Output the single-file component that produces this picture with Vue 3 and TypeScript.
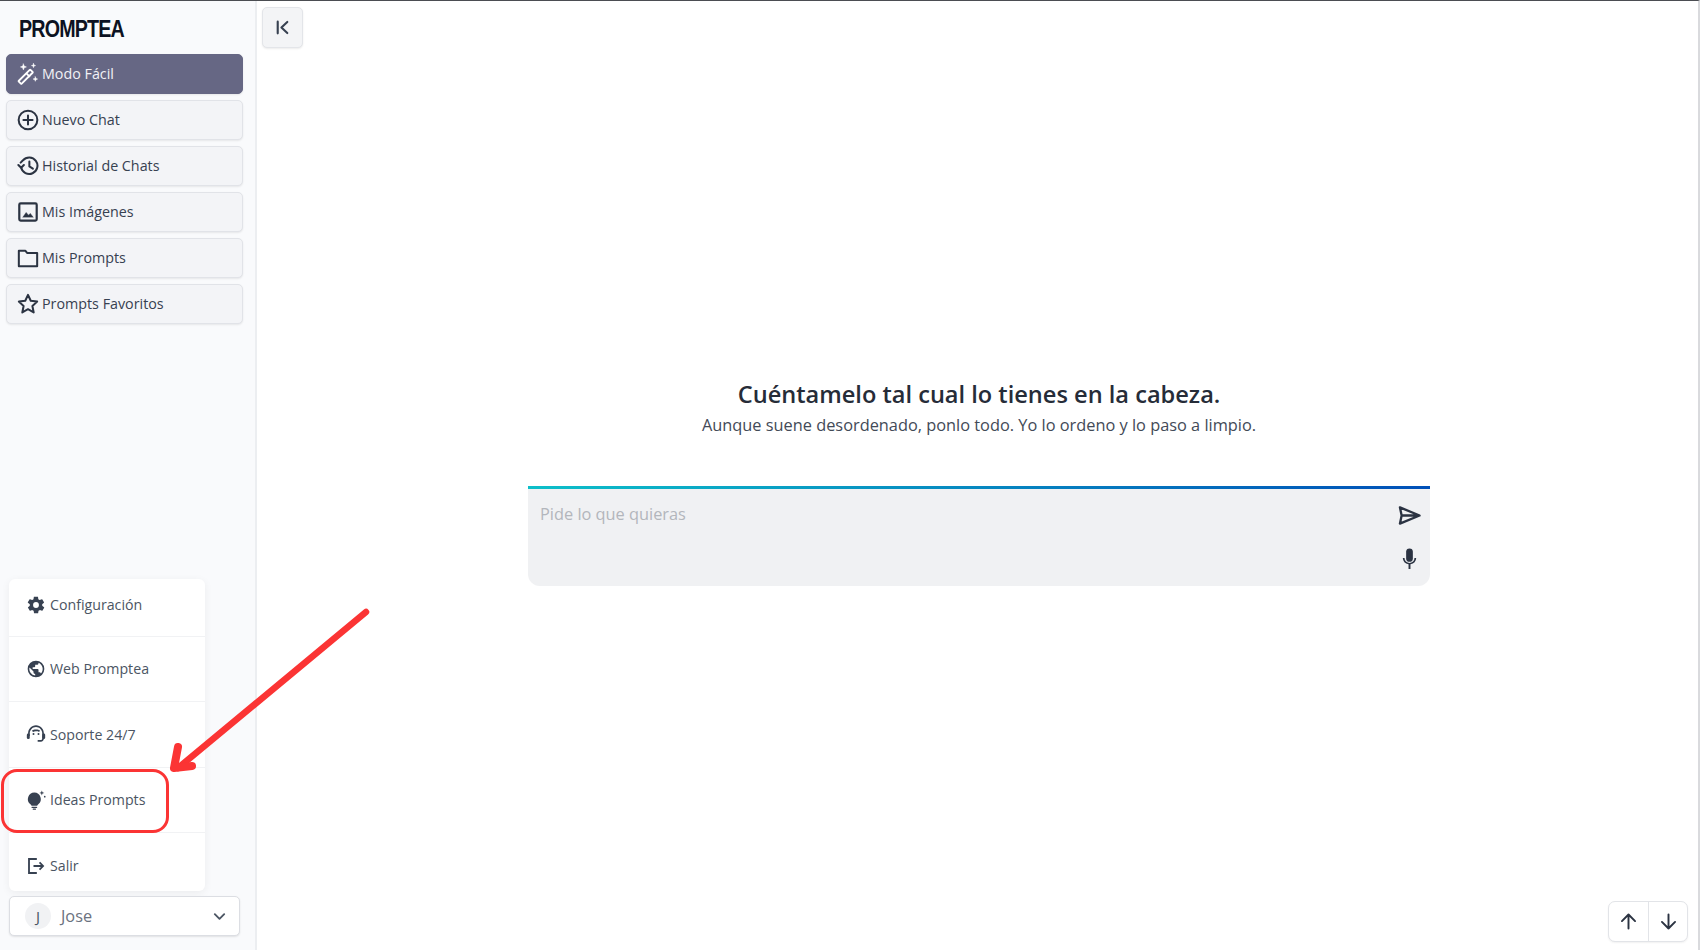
<script setup lang="ts">
const navItems = [
  { label: 'Modo Fácil', icon: 'wand', active: true },
  { label: 'Nuevo Chat', icon: 'plus', active: false },
  { label: 'Historial de Chats', icon: 'history', active: false },
  { label: 'Mis Imágenes', icon: 'image', active: false },
  { label: 'Mis Prompts', icon: 'folder', active: false },
  { label: 'Prompts Favoritos', icon: 'star', active: false },
]
const menuItems = [
  { label: 'Configuración', icon: 'gear' },
  { label: 'Web Promptea', icon: 'globe' },
  { label: 'Soporte 24/7', icon: 'support' },
  { label: 'Ideas Prompts', icon: 'bulb' },
  { label: 'Salir', icon: 'exit' },
]
</script>

<template>
  <div class="page">
    <aside class="sidebar">
      <div class="logo"><span>PROMPTEA</span></div>
      <nav class="nav">
        <button v-for="item in navItems" :key="item.label" class="nav-btn" :class="{ active: item.active }">
          <svg class="nav-icon" viewBox="0 0 24 24" fill="none" stroke="currentColor" stroke-width="2.2" stroke-linecap="round" stroke-linejoin="round">
            <template v-if="item.icon === 'wand'">
              <rect x="-2.2" y="-9" width="4.4" height="18" rx=".6" transform="translate(9.500 15) rotate(45)" stroke-width="2" />
              <path d="M10.500 11.500l3 3" stroke-width="2" />
              <path d="M7 1l.9 2.400 2.400.9-2.400.9L7 7.600l-.9-2.400-2.400-.9 2.400-.9z M18 .5l.6 1.700 1.700.6-1.700.6-.6 1.700-.6-1.700-1.700-.6 1.700-.6z M20 15l.7 1.800 1.800.7-1.800.7-.7 1.800-.7-1.800-1.800-.7 1.800-.7z" fill="currentColor" stroke-width="0.5" />
            </template>
            <template v-else-if="item.icon === 'plus'">
              <circle cx="12" cy="12" r="10.200" /><path d="M12 7v10M7 12h10" />
            </template>
            <template v-else-if="item.icon === 'history'">
              <path d="M4.500 13.500A9 9 0 1 0 6.500 5.800L4 8.300" /><path d="M1.500 11l3 3 3-3" /><path d="M13.500 7v5.500l3.800 2.400" />
            </template>
            <template v-else-if="item.icon === 'image'">
              <rect x="2.500" y="2.500" width="19" height="19" rx="1.500" stroke-width="2.400" />
              <path d="M6.500 17.500l3.500-5 2.500 3 2-2 3 4z" fill="currentColor" stroke-width="0.500" />
            </template>
            <template v-else-if="item.icon === 'folder'">
              <path d="M2 6V4h7l2 2.500h11v14.500H2z" />
            </template>
            <template v-else>
              <path d="M12 2l3 6.500 7 .9-5.200 4.800 1.400 7L12 17.700l-6.200 3.500 1.400-7L2 9.400l7-.9z" />
            </template>
          </svg>
          <span>{{ item.label }}</span>
        </button>
      </nav>

      <div class="spacer"></div>

      <div class="menu">
        <div v-for="item in menuItems" :key="item.label" class="menu-row">
          <svg class="menu-icon" viewBox="0 0 24 24" fill="currentColor">
            <path v-if="item.icon === 'gear'" fill-rule="evenodd" d="M19.400 13c.1-.3.1-.7.1-1s0-.7-.1-1l2.100-1.600c.2-.2.2-.4.1-.6l-2-3.500c-.1-.2-.4-.3-.6-.2l-2.500 1c-.5-.4-1.100-.7-1.700-1l-.4-2.600c0-.3-.2-.5-.5-.5h-4c-.3 0-.5.2-.5.5l-.4 2.600c-.6.3-1.200.6-1.700 1l-2.500-1c-.2-.1-.5 0-.6.2l-2 3.500c-.1.2-.1.5.1.6L4.600 11c0 .3-.1.7-.1 1s0 .7.1 1l-2.100 1.600c-.2.2-.2.4-.1.6l2 3.500c.1.2.4.3.6.2l2.500-1c.5.4 1.100.7 1.700 1l.4 2.600c0 .3.2.5.5.5h4c.3 0 .5-.2.5-.5l.4-2.600c.6-.3 1.200-.6 1.700-1l2.500 1c.2.1.5 0 .6-.2l2-3.500c.1-.2.1-.5-.1-.6zM12 15.500a3.500 3.500 0 1 1 0-7 3.500 3.500 0 0 1 0 7z" />
            <path v-else-if="item.icon === 'globe'" d="M12 2a10 10 0 1 0 0 20 10 10 0 0 0 0-20zm-1 17.900A8 8 0 0 1 4.200 10.200L9 15v1c0 1.100.9 2 2 2zm6.900-2.500c-.3-.8-1-1.400-1.900-1.400h-1v-3c0-.6-.4-1-1-1H8v-2h2c.6 0 1-.4 1-1V7h2c1.100 0 2-.9 2-2v-.4a8 8 0 0 1 2.900 12.800z" />
            <template v-else-if="item.icon === 'support'">
              <path d="M12 1.500C6.500 1.500 2.500 6 2.500 11.500v3h2v-3C4.500 7 7.800 3.500 12 3.500s7.500 3.500 7.500 8v6c0 1-.7 1.800-1.700 1.800H14v2h3.800c2.100 0 3.700-1.700 3.700-3.800v-6c0-5.500-4-10-9.500-10z" />
              <rect x="1" y="11.500" width="3.500" height="6.500" rx="1.600" />
              <rect x="19.500" y="11.500" width="3.500" height="6.500" rx="1.600" />
              <circle cx="9" cy="12" r="1.200" /><circle cx="15" cy="12" r="1.200" />
              <path d="M7 8C9 6 15 6 17 8L15.500 9.500c-1.500-1-5.500-1-7 0z" />
            </template>
            <template v-else-if="item.icon === 'bulb'">
              <path d="M10 3a8 8 0 0 0-4.800 14.200c.7.500 1.300 1 1.300 1.800h7c0-.8.600-1.300 1.300-1.800A8 8 0 0 0 10 3z" />
              <rect x="6.500" y="20" width="7" height="1.600" rx=".8" />
              <rect x="8" y="22.300" width="4" height="1.400" rx=".7" />
              <path d="M19 .5l.8 2.200 2.200.8-2.200.8-.8 2.200-.8-2.200-2.200-.8 2.200-.8z" />
              <circle cx="22.500" cy="8" r="1" />
            </template>
            <path v-else d="M2.500 2.500H13v2.200H4.700v14.600H13v2.200H2.500zM17 7l5 5-5 5-1.500-1.500 2.400-2.400H9v-2.200h8.900l-2.400-2.400z" />
          </svg>
          <span>{{ item.label }}</span>
        </div>
      </div>

      <div class="user">
        <span class="avatar">J</span>
        <span class="user-name">Jose</span>
        <svg class="chev" viewBox="0 0 16 16" fill="none" stroke="currentColor" stroke-width="2" stroke-linecap="round" stroke-linejoin="round"><path d="M3 5.500l5 5 5-5" /></svg>
      </div>
    </aside>

    <main class="main">
      <button class="collapse" aria-label="Contraer">
        <svg viewBox="0 0 16 16" fill="none" stroke="currentColor" stroke-width="2" stroke-linecap="round" stroke-linejoin="round"><path d="M3.500 2.500v11M12.500 2.800L7 8l5.500 5.200" /></svg>
      </button>

      <section class="center">
        <h1 class="title">Cuéntamelo tal cual lo tienes en la cabeza.</h1>
        <p class="subtitle">Aunque suene desordenado, ponlo todo. Yo lo ordeno y lo paso a limpio.</p>
        <div class="composer">
          <span class="placeholder">Pide lo que quieras</span>
          <div class="composer-actions">
            <svg class="send" viewBox="0 0 24 24" fill="none" stroke="currentColor" stroke-width="2.400" stroke-linejoin="round"><path d="M2 3.500L22.500 12 2 20.500l1.800-8.500zM4 12h18" /></svg>
            <svg class="mic" viewBox="0 0 24 24" fill="currentColor"><rect x="8.500" y="1.500" width="7" height="14" rx="3.500" /><path d="M5 11.500h1.800a5.200 5.200 0 0 0 10.400 0H19a7 7 0 0 1-6 6.500V23h-2v-5a7 7 0 0 1-6-6.500z" /></svg>
          </div>
        </div>
      </section>

      <div class="pager">
        <button class="pager-btn" aria-label="Subir">
          <svg viewBox="0 0 24 24" fill="none" stroke="currentColor" stroke-width="2.200" stroke-linecap="round" stroke-linejoin="round"><path d="M12 20V4M4.500 11.500L12 4l7.500 7.500" /></svg>
        </button>
        <button class="pager-btn" aria-label="Bajar">
          <svg viewBox="0 0 24 24" fill="none" stroke="currentColor" stroke-width="2.200" stroke-linecap="round" stroke-linejoin="round"><path d="M12 4v16M4.500 12.500L12 20l7.500-7.500" /></svg>
        </button>
      </div>
    </main>

    <svg class="annotation" width="380" height="300" viewBox="0 0 380 300" fill="none" stroke="#fb3434" stroke-linecap="round" stroke-linejoin="round">
      <path d="M366 41L178 197" stroke-width="6.500" />
      <path d="M178 176L174 197L192 195" stroke-width="8" />
    </svg>
    <div class="highlight"></div>
  </div>
</template>

<style>
html, body { margin: 0; background: #fff; }
</style>

<style scoped>
.page {
  position: relative;
  display: flex;
  width: 1700px;
  height: 950px;
  overflow: hidden;
  box-sizing: border-box;
  border-top: 1px solid #4b4d52;
  border-right: 2px solid #d9dadd;
  font-family: "Open Sans", "Liberation Sans", sans-serif;
  color: #374151;
}
.sidebar {
  width: 257px;
  flex: none;
  box-sizing: border-box;
  background: #f9fafc;
  border-right: 2px solid #eceef1;
  display: flex;
  flex-direction: column;
  padding: 0 0 13px 6px;
}
.logo {
  margin: 14px 0 0 13px;
  height: 27px;
  line-height: 28px;
  font-family: "Liberation Sans", sans-serif;
  font-size: 24px;
  font-weight: 700;
  letter-spacing: -1px;
  color: #0c1222;
}
.logo span { display: inline-block; transform: scaleX(.82); transform-origin: left center; }
.nav { margin-top: 12px; display: flex; flex-direction: column; gap: 6px; width: 237px; }
.nav-btn {
  height: 40px;
  box-sizing: border-box;
  display: flex;
  align-items: center;
  gap: 3px;
  padding: 0 0 0 10px;
  background: #f3f4f7;
  border: 1px solid #e1e3e8;
  border-radius: 5px;
  box-shadow: 0 1px 2px rgba(0,0,0,.08);
  font: 14.300px "Open Sans", sans-serif;
  color: #374151;
}
.nav-btn span { position: relative; top: -1px; }
.nav-btn.active { background: #666784; border-color: #666784; color: #f1f1f6; }
.nav-icon { width: 22px; height: 22px; flex: none; color: #2b3342; }
.active .nav-icon { color: #fff; }
.spacer { flex: 1; }
.menu {
  width: 196px;
  margin-left: 3px;
  background: #fff;
  border-radius: 6px;
  box-shadow: 0 2px 8px rgba(0,0,0,.06);
}
.menu-row {
  height: 65.500px;
  box-sizing: border-box;
  display: flex;
  align-items: center;
  gap: 4px;
  padding: 0 0 0 17px;
  border-bottom: 1.500px solid #f1f2f4;
  font-size: 14.200px;
  color: #4b5563;
}
.menu-row:first-child { height: 58px; padding-bottom: 5px; }
.menu-row:last-child { border-bottom: 0; height: 58px; padding-top: 7px; }
.menu-icon { width: 20px; height: 20px; flex: none; color: #374151; }
.user {
  width: 231px;
  height: 40px;
  margin: 5px 0 1px 3px;
  box-sizing: border-box;
  background: #fff;
  border: 1px solid #dcdee3;
  border-radius: 5px;
  box-shadow: 0 1px 2px rgba(0,0,0,.1);
  display: flex;
  align-items: center;
  padding: 0 11px 0 15px;
}
.avatar {
  width: 26px;
  height: 26px;
  border-radius: 50%;
  background: #f1f2f4;
  color: #4b5563;
  font-size: 15px;
  display: flex;
  align-items: center;
  justify-content: center;
}
.user-name { margin-left: 10px; flex: 1; font-size: 16.300px; color: #6b7280; }
.chev { width: 15px; height: 15px; color: #4b5563; margin-right: 1px; }
.main { position: relative; flex: 1; background: #fff; }
.collapse {
  position: absolute;
  left: 5px;
  top: 6px;
  width: 41px;
  height: 41px;
  padding: 11px;
  box-sizing: border-box;
  background: #f3f4f6;
  border: 1px solid #e3e5e9;
  border-radius: 5px;
  box-shadow: 0 1px 2px rgba(0,0,0,.08);
  color: #374151;
}
.collapse svg { display: block; width: 17px; height: 17px; }
.center {
  display: flex;
  flex-direction: column;
  align-items: center;
  padding: 377px 0 0 3px;
}
.title { margin: 0; font-size: 23.600px; line-height: 32px; font-weight: 600; color: #262c38; }
.subtitle { margin: 1px 0 0; font-size: 16.350px; line-height: 28px; color: #434a57; }
.composer {
  position: relative;
  margin-top: 47px;
  width: 902px;
  height: 100px;
  box-sizing: border-box;
  background:
    linear-gradient(90deg, #0cbfc9, #0050b8) top / 100% 3px no-repeat,
    #f0f1f3;
  border-radius: 0 0 12px 12px;
  padding: 16px 12px;
}
.placeholder { font-size: 16.350px; color: #b3b6bc; position: relative; top: 1px; }
.composer-actions {
  position: absolute;
  right: 9px;
  top: 18px;
  display: flex;
  flex-direction: column;
  align-items: center;
  gap: 20px;
  color: #2b3342;
}
.send { width: 23px; height: 23px; }
.mic { width: 23px; height: 23px; }
.pager {
  position: absolute;
  right: 10px;
  bottom: 8px;
  display: flex;
  box-sizing: border-box;
  width: 80px;
  border: 1px solid #e2e4e8;
  border-radius: 7px;
  background: #fff;
  box-shadow: 0 1px 2px rgba(0,0,0,.06);
}
.pager-btn {
  flex: 1;
  height: 39px;
  padding: 9px;
  box-sizing: border-box;
  background: none;
  border: 0;
  color: #2b3342;
}
.pager-btn + .pager-btn { border-left: 1px solid #e2e4e8; }
.pager-btn svg { display: block; width: 21px; height: 21px; }
.annotation { position: absolute; left: 0; top: 570px; pointer-events: none; }
.highlight {
  position: absolute;
  left: 1px;
  top: 768px;
  width: 168px;
  height: 64px;
  box-sizing: border-box;
  border: 3.500px solid #fb3434;
  border-radius: 16px;
}
</style>
